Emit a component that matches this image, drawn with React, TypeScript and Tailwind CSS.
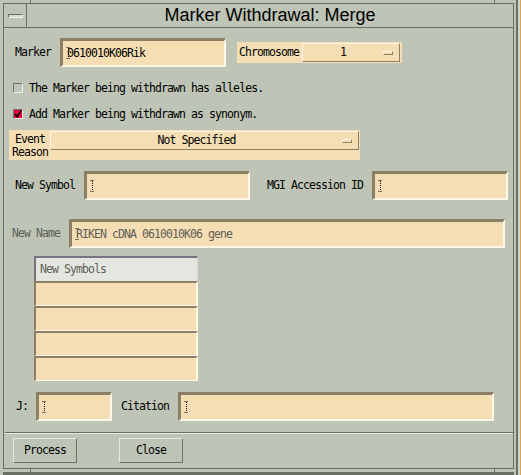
import React from 'react';

// Motif-ish look: gray-green form, wheat text fields, 1-3px bevels
const mono =
  "font-['DejaVu_Sans_Mono',monospace] text-[11.5px] tracking-[-0.92px] leading-[13px] whitespace-nowrap";
const stippled = 'text-[#5f6059]';

function IBeam() {
  return (
    <svg width="5" height="12" viewBox="0 0 5 12" className="shrink-0 -mr-[4px]">
      <path
        d="M0.5 0.5h4M2.5 1v10M0.5 11.5h4"
        stroke="#000"
        strokeWidth="1"
        strokeDasharray="1 1"
        fill="none"
      />
    </svg>
  );
}

function TextField({ className, children }: { className: string; children?: React.ReactNode }) {
  return (
    <div
      className={
        'h-[29px] bg-[#f5deb3] border-t-[3px] border-l-[3px] border-b-2 border-r-2 border-t-[#8b7f66] border-l-[#8b7f66] border-b-[#fff8e8] border-r-[#fff8e8] flex items-center pl-[3px] ' +
        className
      }
    >
      <IBeam />
      {children}
    </div>
  );
}

function Indicator() {
  return (
    <div className="w-[10px] h-[4px] bg-[#f5deb3] border-t border-l border-b border-r border-t-[#fff8e8] border-l-[#fff8e8] border-b-[#8b7f66] border-r-[#8b7f66]" />
  );
}

function Checkbox({ checked }: { checked?: boolean }) {
  if (checked) {
    return (
      <div className="w-[10px] h-[10px] bg-[#f0003c] border-t border-l border-t-[#6d7267] border-l-[#6d7267] border-b border-r border-b-[#eef0e8] border-r-[#eef0e8] flex items-center justify-center">
        <svg width="8" height="8" viewBox="0 0 8 8">
          <path d="M0.8 3.8l2.4 3 4.2-6.6" stroke="#000" strokeWidth="1.6" fill="none" />
        </svg>
      </div>
    );
  }
  return (
    <div className="w-[10px] h-[10px] border-t border-l border-t-[#6d7267] border-l-[#6d7267] border-b border-r border-b-[#eef0e8] border-r-[#eef0e8]" />
  );
}

function PushButton({ label, className }: { label: string; className: string }) {
  return (
    <div
      className={
        'w-[64px] h-[25px] border border-t-[#e6e9e0] border-l-[#e6e9e0] border-b-[#6d7267] border-r-[#6d7267] flex items-center justify-center ' +
        mono +
        ' ' +
        className
      }
    >
      {label}
    </div>
  );
}

function TableRow() {
  return (
    <div className="h-[25px] bg-[#f5deb3] border-t-2 border-l-2 border-t-[#8b7f66] border-l-[#8b7f66] border-b border-r-2 border-b-[#fff8e8] border-r-[#fff8e8]" />
  );
}

function FrameTicks() {
  return (
    <div className="h-[3px] flex">
      <div className="w-[27px]" />
      <div className="w-px bg-[#6a6f66]" />
      <div className="w-[463px]" />
      <div className="w-px bg-[#6a6f66]" />
    </div>
  );
}

export default function App() {
  return (
    <div className="w-[521px] h-[475px] bg-[#bec4b6] flex overflow-hidden text-black">
      {/* window frame */}
      <div className="w-[516px] h-full flex flex-col pl-[3px] pr-[2px]">
        <FrameTicks />
        <div className="h-[466px] flex flex-col border border-[#6a6f66]">
          {/* title bar */}
          <div className="h-[24px] flex border-b border-b-[#6a6f66] shrink-0">
            <div className="w-[23px] border-r border-r-[#6a6f66] flex items-center justify-center">
              <div className="w-[15px] h-[4px] border-t border-l border-t-[#6a6f66] border-l-[#6a6f66] border-b border-r border-b-[#eef0e8] border-r-[#eef0e8] bg-[#d6dacf]" />
            </div>
            <div className="flex-1 flex items-center justify-center font-['Liberation_Sans',Arial,sans-serif] text-[18px] leading-none pb-[1px]">
              Marker Withdrawal: Merge
            </div>
          </div>

          {/* client area */}
          <div className="flex-1 flex flex-col">
            {/* Marker / Chromosome */}
            <div className="mt-[10px] h-[29px] flex items-center">
              <span className={mono + ' ml-[11px]'}>Marker</span>
              <TextField className="ml-[9px] w-[166px]">
                <span className={mono}>0610010K06Rik</span>
              </TextField>
              <div className="ml-[11px] w-[165px] h-[21px] bg-[#f5deb3] flex items-center pl-[2px]">
                <span className={mono}>Chromosome</span>
                <div className="ml-[3px] w-[98px] h-[19px] border border-t-[#fff8e8] border-l-[#fff8e8] border-b-[#8b7f66] border-r-[#8b7f66] flex items-center pr-[6px]">
                  <span className={mono + ' flex-1 text-center'}>1</span>
                  <Indicator />
                </div>
              </div>
            </div>

            {/* checkboxes */}
            <div className="mt-[16px] h-[10px] flex items-center">
              <div className="ml-[9px]">
                <Checkbox />
              </div>
              <span className={mono + ' ml-[6px]'}>The Marker being withdrawn has alleles.</span>
            </div>
            <div className="mt-[16px] h-[10px] flex items-center">
              <div className="ml-[9px]">
                <Checkbox checked />
              </div>
              <span className={mono + ' ml-[6px]'}>Add Marker being withdrawn as synonym.</span>
            </div>

            {/* Event Reason */}
            <div className="mt-[11px] ml-[5px] w-[351px] h-[30px] bg-[#f5deb3] flex items-start">
              <div className={mono + ' ml-[1px] w-[40px] pt-[3px] flex flex-col items-center'}>
                <span>Event</span>
                <span>Reason</span>
              </div>
              <div className="mt-[1px] w-[309px] h-[19px] border border-t-[#fff8e8] border-l-[#fff8e8] border-b-[#8b7f66] border-r-[#8b7f66] flex items-center pr-[6px]">
                <span className={mono + ' flex-1 text-center'}>Not Specified</span>
                <Indicator />
              </div>
            </div>

            {/* New Symbol / MGI Accession ID */}
            <div className="mt-[11px] h-[29px] flex items-center">
              <span className={mono + ' ml-[11px]'}>New Symbol</span>
              <TextField className="ml-[9px] w-[166px]" />
              <span className={mono + ' ml-[17px]'}>MGI Accession ID</span>
              <TextField className="ml-[9px] w-[136px]" />
            </div>

            {/* New Name (insensitive) */}
            <div className="mt-[19px] h-[29px] flex items-center">
              <span className={mono + ' ml-[8px] ' + stippled}>New Name</span>
              <TextField className="ml-[9px] w-[436px]">
                <span className={mono + ' ' + stippled}>RIKEN cDNA 0610010K06 gene</span>
              </TextField>
            </div>

            {/* New Symbols table */}
            <div className="mt-[8px] ml-[30px] w-[164px] flex flex-col">
              <div className="h-[25px] bg-[#e4e6e0] border-t-2 border-l-2 border-t-[#7a7283] border-l-[#7a7283] border-r border-r-[#dcd8e2] flex items-center pl-[4px]">
                <span className={mono + ' ' + stippled}>New Symbols</span>
              </div>
              <TableRow />
              <TableRow />
              <TableRow />
              <TableRow />
            </div>

            {/* J: / Citation */}
            <div className="mt-[11px] h-[29px] flex items-center">
              <span className={mono + ' ml-[12px]'}>J:</span>
              <TextField className="ml-[8px] w-[76px]" />
              <span className={mono + ' ml-[9px]'}>Citation</span>
              <TextField className="ml-[9px] w-[316px]" />
            </div>

            {/* separator */}
            <div className="mt-[11px] ml-[1px] h-[2px] border-t border-t-[#6a6f66] border-b border-b-[#e6e9e0]" />

            {/* buttons */}
            <div className="mt-[4px] flex">
              <PushButton label="Process" className="ml-[9px]" />
              <PushButton label="Close" className="ml-[42px]" />
            </div>
          </div>
        </div>
        <FrameTicks />
        <div className="h-[3px] bg-[#6a6f66]" />
      </div>
      <div className="w-[2px] h-full bg-[#6a6f66]" />
      <div className="w-[2px] h-full bg-[#d2d5cc]" />
      <div className="w-[1px] h-full bg-[#d7a55a]" />
    </div>
  );
}
